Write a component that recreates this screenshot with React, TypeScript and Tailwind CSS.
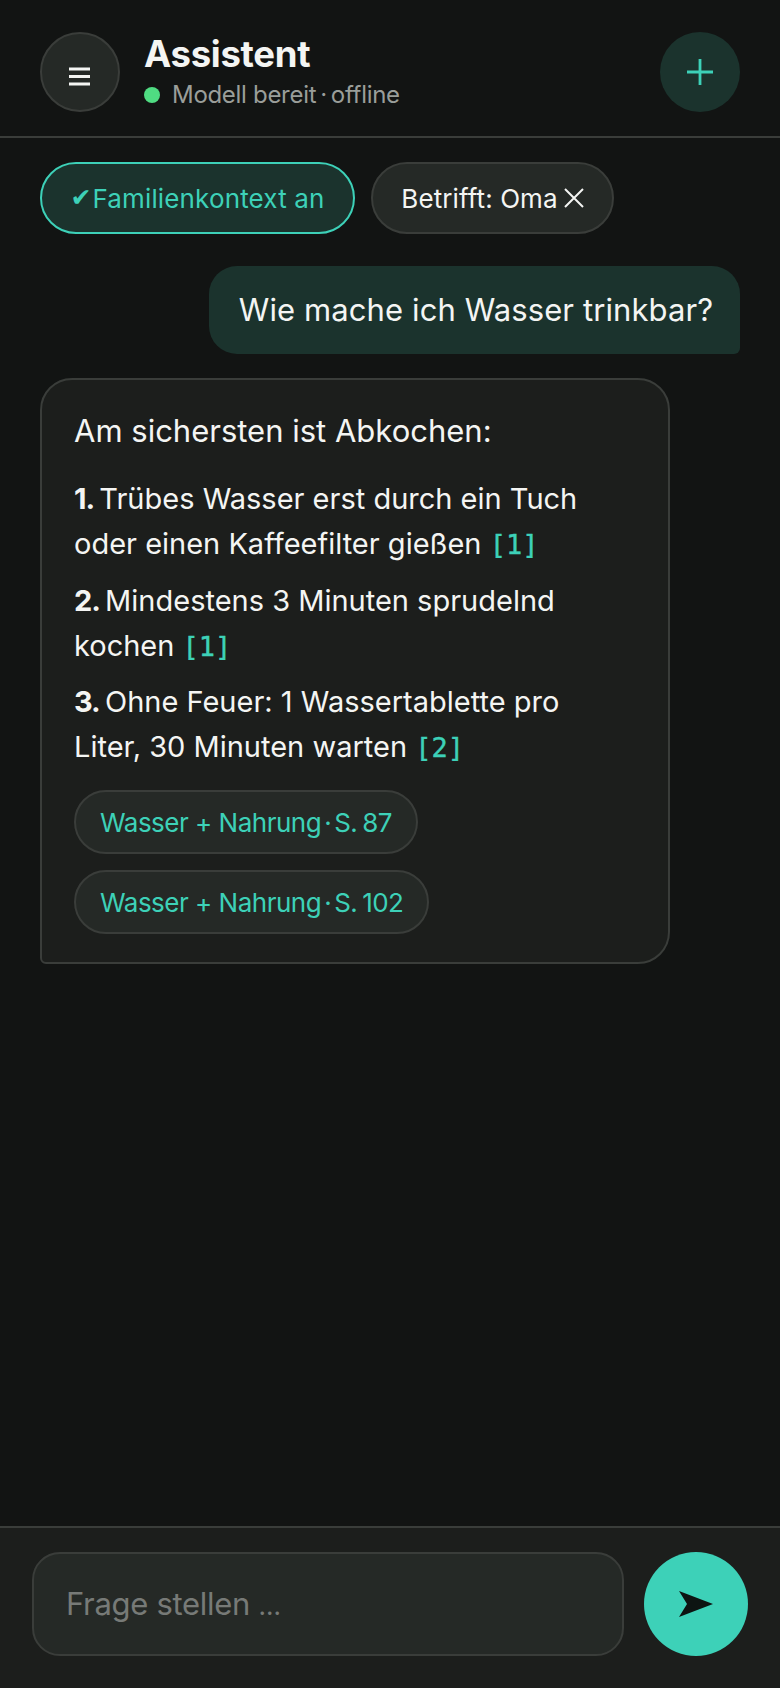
import React from "react";

const sans = "font-['Inter','Liberation_Sans',sans-serif]";
const Ref = ({ n }: { n: number }) => (
  <span className="font-['DejaVu_Sans_Mono',monospace] text-[27px] font-medium text-[#3dd1b8] [-webkit-text-stroke:0.4px_#3dd1b8]">[{n}]</span>
);
const Num = ({ children }: { children: React.ReactNode }) => (
  <b className="mr-[-3px] tracking-[-1px]">{children}</b>
);
const Source = ({ page }: { page: string }) => (
  <div className="flex h-[64px] w-fit items-center rounded-full border-2 border-[#3a3d3a] bg-[#252926] px-[24px] text-[26px] tracking-[-0.5px] text-[#3dd1b8]">
    Wasser + Nahrung<span className="mx-[3px]">·</span><span className="[word-spacing:-2px]">S. {page}</span>
  </div>
);

export default function App() {
  return (
    <div className={`${sans} flex h-[1688px] w-[780px] flex-col overflow-hidden bg-[#121413] text-[#f4f5f3]`}>
      <header className="flex h-[138px] shrink-0 items-start border-b-2 border-[#3a3d3a] px-[40px] pt-[32px]">
        <div className="flex h-[80px] w-full items-center">
          <button className="flex h-[80px] w-[80px] items-center justify-center rounded-full border-2 border-[#3a3d3a] bg-[#252926]">
            <svg className="translate-y-[4px]" width="22" height="19" viewBox="0 0 22 19" fill="#f4f5f3">
              <rect x="0" y="0.5" width="21" height="3" />
              <rect x="0" y="8" width="21" height="3" />
              <rect x="0" y="15.5" width="21" height="3" />
            </svg>
          </button>
          <div className="ml-[24px] flex flex-col">
            <div className="text-[36.5px] font-bold leading-[38px] tracking-[-0.3px]">Assistent</div>
            <div className="mt-[7px] flex items-center text-[24px] leading-[30px] tracking-[-0.3px] text-[#9a9e9a]">
              <span className="mr-[12px] h-[16px] w-[16px] rounded-full bg-[#4fdc82]" />
              Modell bereit<span className="mx-[4px]">·</span>offline
            </div>
          </div>
          <button className="ml-auto flex h-[80px] w-[80px] items-center justify-center rounded-full bg-[#1b332d]">
            <svg width="26" height="26" viewBox="0 0 26 26" stroke="#3dd1b8" strokeWidth="2.8">
              <path d="M13 0v26M0 13h26" />
            </svg>
          </button>
        </div>
      </header>

      <main className="flex flex-1 flex-col px-[40px] pt-[24px]">
        <div className="flex gap-[16px]">
          <div className="flex h-[72px] w-[315px] items-center justify-center rounded-full border-2 border-[#3dd1b8] bg-[#1b332d] text-[26px] text-[#3dd1b8]">
            <span className="font-['DejaVu_Sans',sans-serif] text-[25px]">✔</span>
            <span className="ml-[1px] tracking-[0.15px]">Familienkontext an</span>
          </div>
          <div className="flex h-[72px] w-[243px] items-center justify-center gap-[6px] rounded-full border-2 border-[#3a3d3a] bg-[#252926] text-[26px] tracking-[0.1px]">
            Betrifft: Oma
            <svg width="20" height="20" viewBox="0 0 20 20" stroke="#f4f5f3" strokeWidth="2">
              <path d="M1 1l18 18M19 1L1 19" />
            </svg>
          </div>
        </div>

        <div className="mt-[32px] flex justify-end">
          <div className="flex h-[88px] w-[531px] items-center justify-center rounded-[28px] rounded-br-[6px] bg-[#1b332d] pl-[3px] text-[31px] tracking-[0.1px]">
            Wie mache ich Wasser trinkbar?
          </div>
        </div>

        <div className="mt-[24px] h-[586px] w-[630px] rounded-[32px] rounded-bl-[6px] border-2 border-[#3a3d3a] bg-[#1c1e1c] pl-[32px] pr-[46px] pt-[28px]">
          <p className="text-[31px] leading-[46px]">Am sichersten ist Abkochen:</p>
          <p className="mt-[22px] text-[29px] leading-[45px]">
            <Num>1.</Num> Trübes Wasser erst durch ein Tuch oder einen Kaffeefilter gießen <Ref n={1} />
          </p>
          <p className="mt-[10.5px] text-[29px] leading-[45px]">
            <Num>2.</Num> Mindestens 3 Minuten sprudelnd kochen <Ref n={1} />
          </p>
          <p className="mt-[10.5px] text-[29px] leading-[45px]">
            <Num>3.</Num> Ohne Feuer: 1 Wassertablette pro Liter, 30 Minuten warten <Ref n={2} />
          </p>
          <div className="mt-[20px] flex flex-col gap-[16px]">
            <Source page="87" />
            <Source page="102" />
          </div>
        </div>
      </main>

      <footer className="flex h-[162px] shrink-0 items-start gap-[20px] border-t-2 border-[#3a3d3a] bg-[#1c1e1c] px-[32px] pt-[24px]">
        <div className="flex h-[104px] w-[592px] items-center rounded-[28px] border-2 border-[#3a3d3a] bg-[#252926] pl-[32px] text-[31px] tracking-[-0.3px] text-[#777a77]">
          <span>Frage stellen <span className="text-[26px]">…</span></span>
        </div>
        <button className="flex h-[104px] w-[104px] items-center justify-center rounded-full bg-[#3dd1b8]">
          <svg width="36" height="28" viewBox="0 0 36 28" fill="#0d1412">
            <path d="M1 1L35 14L1 27L9 14Z" />
          </svg>
        </button>
      </footer>
    </div>
  );
}
